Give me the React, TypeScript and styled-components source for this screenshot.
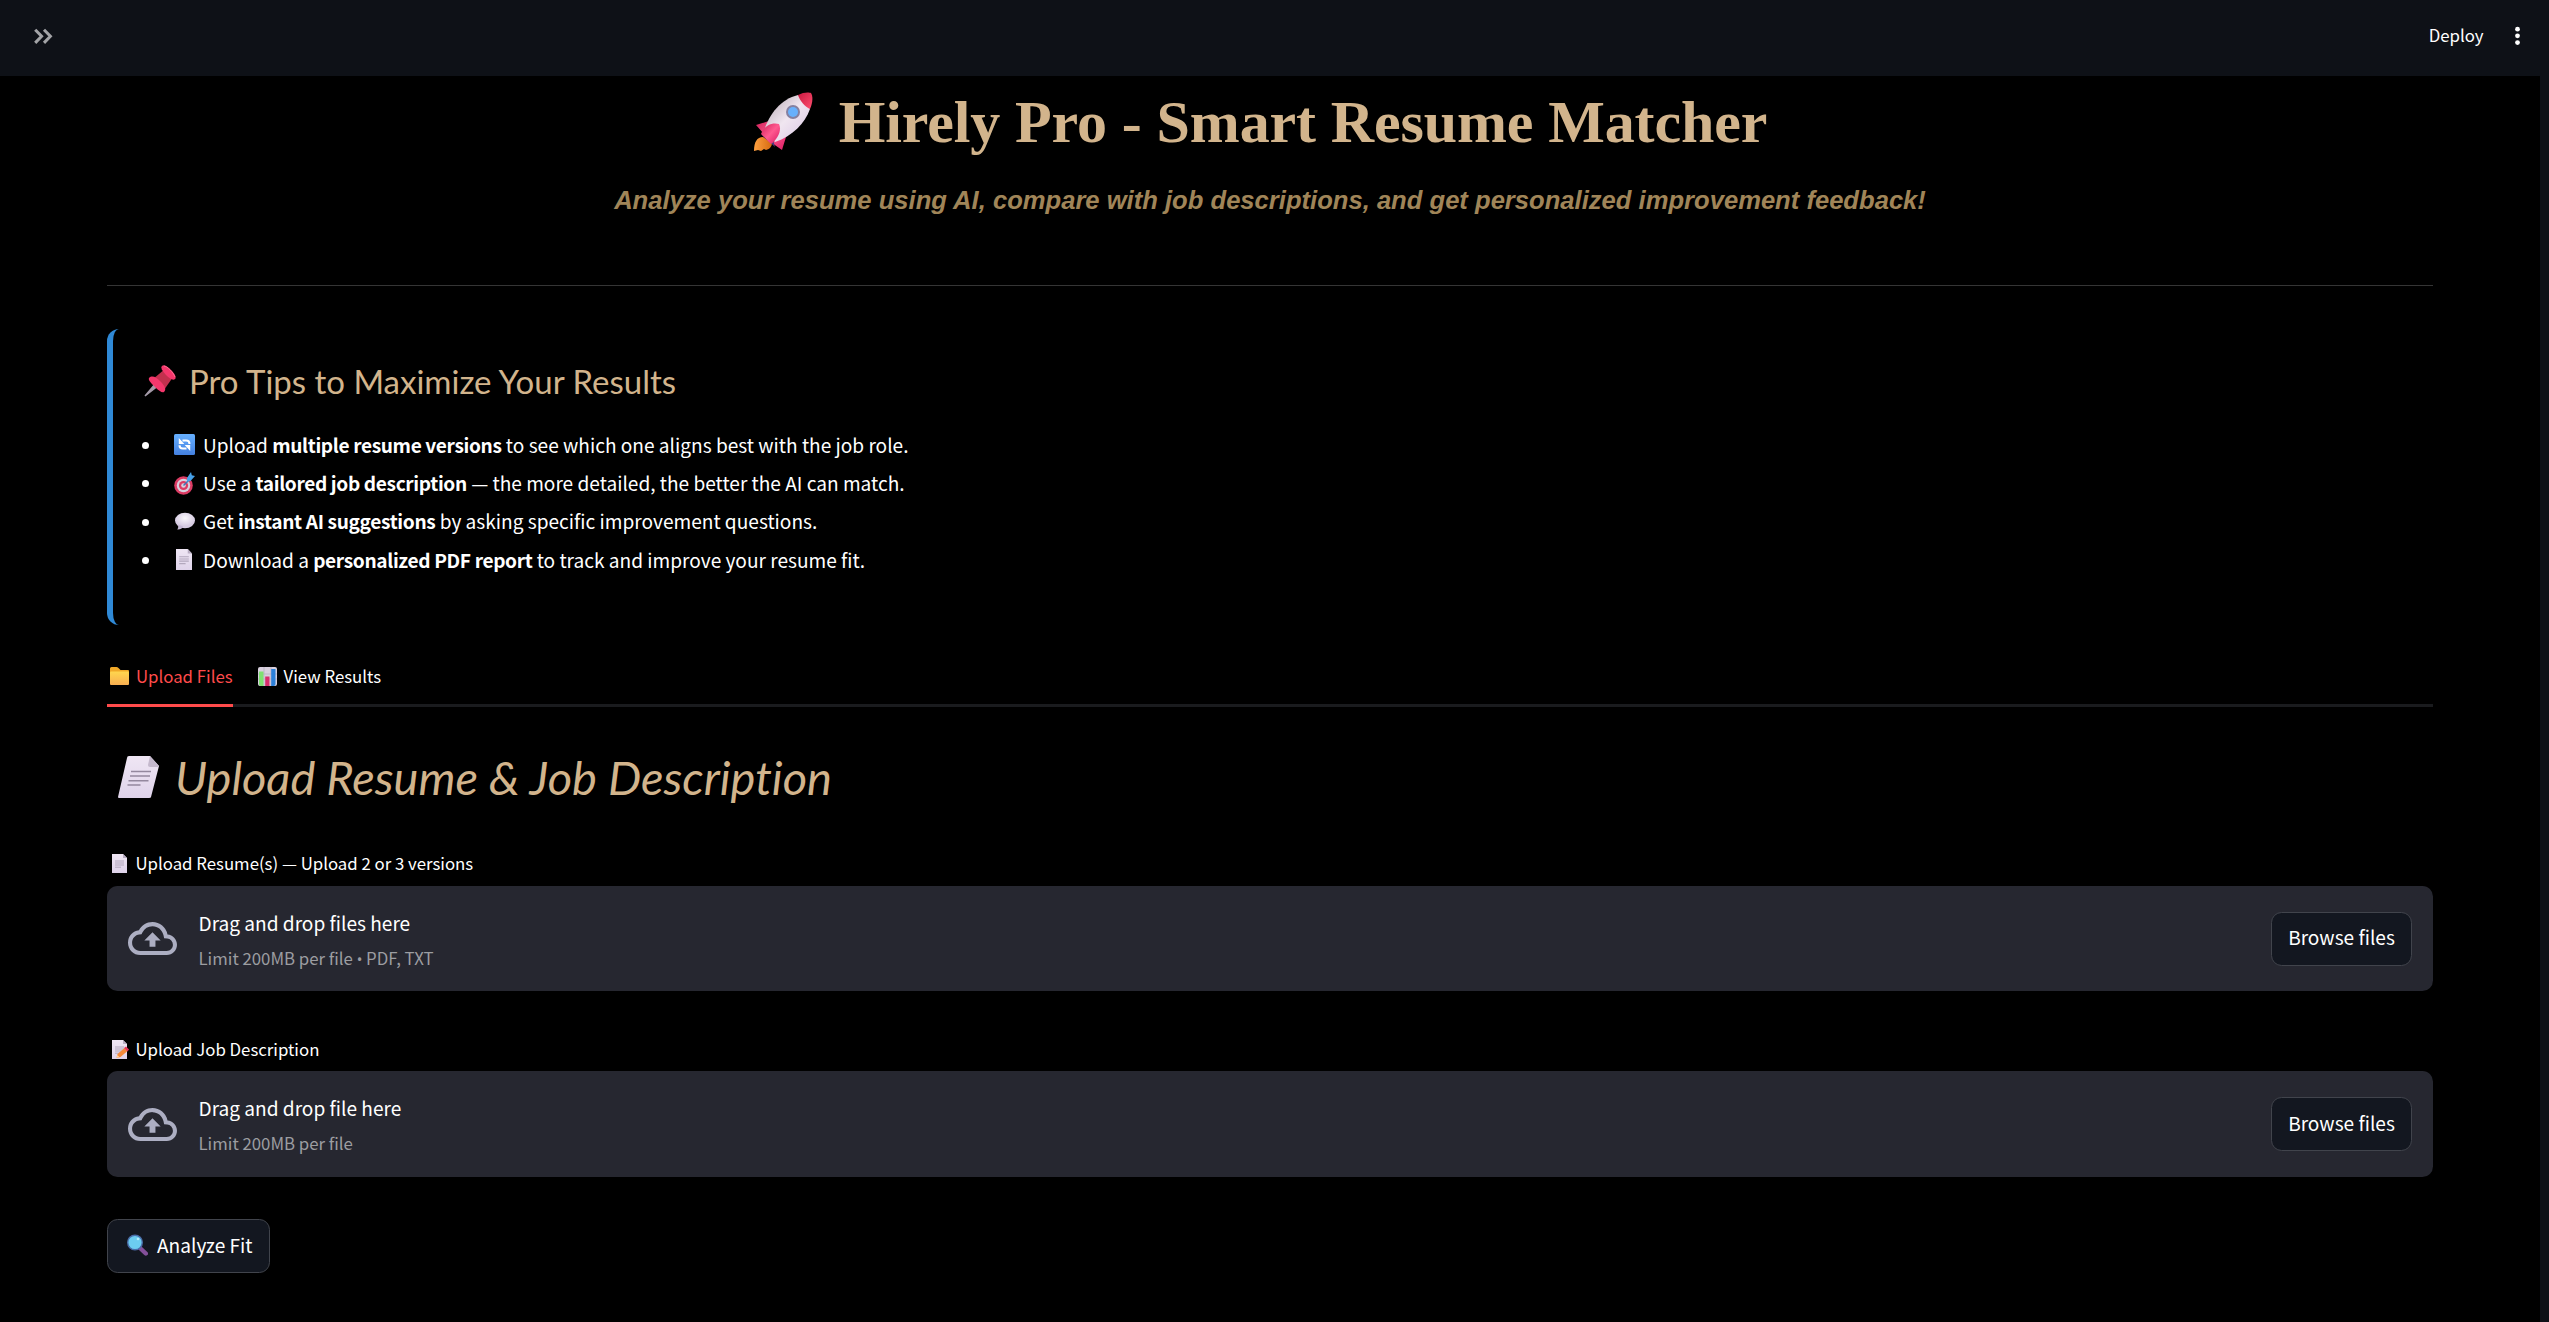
import React from 'react';
import styled, { createGlobalStyle } from 'styled-components';

const sans = '"Source Sans Pro", "Noto Sans CJK SC", sans-serif';
const display = 'Papyrus, Lato, sans-serif';

const Global = createGlobalStyle`
  * { box-sizing: border-box; }
  body { margin: 0; background: #0e1117; color: #fff; font-family: ${sans}; }
  h1, h2, h3, p, ul { margin: 0; padding: 0; font-weight: 400; }
  button { font-family: inherit; color: inherit; }
  svg { display: block; flex: none; }
`;

const Page = styled.div`
  display: flex;
  flex-direction: column;
  height: 1322px;
  overflow: hidden;
`;
const Header = styled.header`
  display: flex;
  align-items: center;
  justify-content: space-between;
  height: 76px;
  padding: 0 26px 5px 29px;
  background: #0e1117;
`;
const HeaderActions = styled.div`
  display: flex;
  align-items: center;
  gap: 26.5px;
`;
const Deploy = styled.button`
  border: 0;
  background: none;
  padding: 0 0 2px;
  font-size: 16.8px;
  line-height: 24px;
`;
const Main = styled.main`
  flex: 1;
  width: 2540px;
  padding: 0 107px;
  background: #000;
`;
const Title = styled.h1`
  display: flex;
  align-items: center;
  justify-content: center;
  gap: 26px;
  height: 92px;
  padding-right: 20px;
  color: #d2b48c;
  font: 700 60px/92px "Times New Roman", "Liberation Serif", serif;
  letter-spacing: -0.12px;
  white-space: nowrap;
`;
const Subtitle = styled.p`
  height: 64px;
  color: #a08558;
  font: italic 700 25.6px/64px "Liberation Sans", sans-serif;
  text-align: center;
  white-space: nowrap;
`;
const Divider = styled.div`
  height: 1px;
  margin-top: 53px;
  background: #353535;
`;
const Tips = styled.section`
  height: 296px;
  margin-top: 43px;
  padding: 22px 0 0 30px;
  border-left: 6px solid #2f89d6;
  border-radius: 12px;
`;
const TipsHeading = styled.h3`
  display: flex;
  align-items: center;
  gap: 13px;
  height: 60px;
  padding-left: 1px;
  color: #d2b48c;
  font: 400 33px/60px ${display};
`;
const TipList = styled.ul`
  margin-top: 14.6px;
  list-style: none;
`;
const TipItem = styled.li`
  display: flex;
  align-items: center;
  height: 38.4px;
  font-size: 19.1px;
  line-height: 38.4px;
  white-space: pre;
  &::before {
    content: '';
    width: 7px;
    height: 7px;
    margin: 1px 24.5px 0 -1px;
    border-radius: 50%;
    background: #fff;
  }
  b { letter-spacing: -0.35px; }
`;
const TipIcon = styled.span`
  display: flex;
  justify-content: center;
  width: 21px;
  margin-right: 8.5px;
`;
const Tabs = styled.nav`
  display: flex;
  gap: 23px;
  height: 59px;
  margin-top: 23px;
  border-bottom: 3px solid #1a1b1e;
`;
const Tab = styled.button<{ $active?: boolean }>`
  display: flex;
  align-items: center;
  gap: 7px;
  height: 59px;
  padding: 0 0 0 2px;
  border: 0;
  border-bottom: 3px solid ${p => (p.$active ? '#ff4b4b' : 'transparent')};
  background: none;
  color: ${p => (p.$active ? '#ff4b4b' : '#fff')};
  font-size: 16.8px;
  line-height: 24px;
`;
const SectionHeading = styled.h2`
  display: flex;
  align-items: center;
  gap: 16px;
  height: 80px;
  margin: 30px 0 33px;
  padding-left: 11px;
  color: #d2b48c;
  font: italic 400 47px/80px ${display};
  font-variant-ligatures: none;
`;
const Label = styled.div`
  display: flex;
  align-items: center;
  height: 26px;
  padding-left: 5px;
  font-size: 16.8px;
  line-height: 26px;
`;
const LabelIcon = styled.span`
  width: 17px;
  margin-right: 6.5px;
`;
const Dropzone = styled.div<{ $h: number; $top: number }>`
  display: flex;
  align-items: center;
  height: ${p => p.$h}px;
  margin-top: ${p => p.$top}px;
  padding: 0 21px;
  border-radius: 10.6px;
  background: #262730;
`;
const DropText = styled.div`
  flex: 1;
  display: flex;
  flex-direction: column;
  margin-left: 21.5px;
  padding-top: 4px;
`;
const DropTitle = styled.span`
  font-size: 19.1px;
  line-height: 34px;
`;
const DropHint = styled.span`
  color: #9c9da1;
  font-size: 16.8px;
  line-height: 36px;
`;
const Bullet = styled.span`
  font: 15px/1 "Noto Sans", sans-serif;
`;
const Button = styled.button<{ $w: number; $left?: number }>`
  display: flex;
  align-items: center;
  justify-content: center;
  gap: 8.5px;
  width: ${p => p.$w}px;
  height: 54px;
  padding: 0 0 3px ${p => p.$left ?? 0}px;
  border: 1px solid #41444c;
  border-radius: 10.6px;
  background: #131720;
  font-size: 19.1px;
  line-height: 28px;
`;
const Spacer = styled.div<{ $h: number }>`
  height: ${p => p.$h}px;
`;

const Chevrons = () => (
  <svg width="28" height="28" viewBox="0 0 28 28" fill="none" stroke="#a3a4a7" strokeWidth="3">
    <path d="M6.200 7.700l6.400 6.600-6.400 6.600M15 7.700l6.400 6.600-6.400 6.600" />
  </svg>
);
const Dots = () => (
  <svg width="13" height="26" viewBox="0 0 13 26" fill="#fff">
    <circle cx="7.500" cy="6.200" r="2.400" /><circle cx="7.500" cy="12.800" r="2.400" /><circle cx="7.500" cy="19.600" r="2.400" />
  </svg>
);
const Rocket = () => (
  <svg width="60" height="60" viewBox="0 0 60 60">
    <defs>
      <linearGradient id="rb" x1="0" y1="0" x2="1" y2="1"><stop offset=".2" stopColor="#c9bcc6" /><stop offset=".5" stopColor="#f0e6f0" /><stop offset="1" stopColor="#d8c4e4" /></linearGradient>
      <linearGradient id="rr" x1="0" y1="0" x2="1" y2="1"><stop offset="0" stopColor="#c81840" /><stop offset="1" stopColor="#ff5070" /></linearGradient>
      <linearGradient id="rf" x1="0" y1="0" x2="1" y2="0"><stop offset="0" stopColor="#ffa040" /><stop offset="1" stopColor="#d46a10" /></linearGradient>
      <linearGradient id="rp" x1="0" y1="0" x2="1" y2="1"><stop offset="0" stopColor="#d02058" /><stop offset=".5" stopColor="#ff5a90" /><stop offset="1" stopColor="#d81860" /></linearGradient>
    </defs>
    <path d="M10 45C4 45 1 50 1 59l4-1 3 1 3-2 2 1c4-1 6-4 6-7z" fill="url(#rf)" />
    <path d="M3 33l13-4c3-1 5-1 7-1L12 43zM29 58l4-13c2-3 2-5 1-6L19 51z" fill="url(#rp)" />
    <path d="M9 43l13 12-2-7-8-8z" fill="#4a3a80" />
    <path d="M11 39C16 22 28 7 45 3c6 3 11 8 12 14C52 31 40 44 22 50z" fill="url(#rb)" />
    <path d="M45 3c5-3 11-3 13-2 2 3 2 9-1 16-5-2-10-8-12-14z" fill="url(#rr)" />
    <path d="M8 42c3-9 12-12 18-10 3 6-1 15-8 20z" fill="url(#rp)" />
    <circle cx="40" cy="20" r="7" fill="#8580a0" /><circle cx="40" cy="20" r="5" fill="#68b0fc" />
  </svg>
);
const Pin = () => (
  <svg width="32" height="32" viewBox="0 0 32 32">
    <path d="M1 31L12 18l3 2z" fill="#a49aa8" stroke="#a49aa8" strokeWidth="1.400" />
    <path d="M9 14L21 4l8 8-9 13z" fill="#c2304e" />
    <path d="M5 13c3-3 7-1 11 3s7 8 4 11c-2 1-5-1-9-5s-7-7-6-9z" fill="#f4376c" />
    <path d="M18 1c2-2 6 1 9 4s6 7 4 9-6-1-9-4-6-7-4-9z" fill="#f4376c" />
    <path d="M20 1c3 0 9 6 11 11" stroke="#ff6f92" fill="none" />
  </svg>
);
const Refresh = () => (
  <svg width="21" height="21" viewBox="0 0 21 21">
    <defs><linearGradient id="bl" x1="0" y1="0" x2="0" y2="1"><stop offset="0" stopColor="#66b0ff" /><stop offset="1" stopColor="#4480e0" /></linearGradient></defs>
    <rect width="21" height="21" rx="1.500" fill="url(#bl)" />
    <path d="M8.500 6.600h3.700q3.300 0 3.300 3.300M12.500 14.500H8.800q-3.300 0-3.300-3.300" fill="none" stroke="#fff" strokeWidth="2" />
    <path d="M4.800 4v6h5.500zM16.200 17v-6h-5.500z" fill="#fff" />
  </svg>
);
const Target = () => (
  <svg width="21" height="25" viewBox="0 0 21 25">
    <circle cx="9.500" cy="14.500" r="9.300" fill="#dc3c64" /><circle cx="9.500" cy="14.500" r="6.700" fill="#d8d0de" />
    <circle cx="9.500" cy="14.500" r="4.600" fill="#dc3c64" /><circle cx="9.500" cy="14.500" r="2.300" fill="#d8d0de" />
    <path d="M9.500 14.500L16 8" stroke="#3a78b8" strokeWidth="1.500" />
    <path d="M13 7l4-6 .8 3.200L21 5l-4.500 5-3.500.5z" fill="#46a0e8" />
  </svg>
);
const Bubble = () => (
  <svg width="21" height="21" viewBox="0 0 21 21">
    <defs><radialGradient id="bu" cx=".5" cy=".35"><stop offset="0" stopColor="#fbf8fc" /><stop offset="1" stopColor="#d6cbe2" /></radialGradient></defs>
    <ellipse cx="11" cy="9.500" rx="10" ry="7.800" fill="url(#bu)" /><path d="M4 13.500c.5 2 .3 3.700-.8 5 3 .3 5-1 6-3z" fill="#c5b8d4" />
  </svg>
);
const Doc = ({ w, h, skew, pencil }: { w: number; h: number; skew?: boolean; pencil?: boolean }) => (
  <svg width={w} height={h} viewBox={skew ? '0 0 41 42' : pencil ? '0 0 17 19' : '0 0 15 19'} preserveAspectRatio="none">
    <defs><linearGradient id="dg" x1="0" y1="0" x2="0" y2="1"><stop offset="0" stopColor="#efe6f4" /><stop offset="1" stopColor="#dfd3ea" /></linearGradient></defs>
    {skew ? (
      <>
        <path d="M11 0h21l9 10-8 31q0 1-2 1H1q-1 0-1-1L9 2q0-2 2-2z" fill="url(#dg)" />
        <path d="M32 0l9 10-1 1h-8q-2 0-2-2z" fill="#c5b9cd" />
        <path d="M13 15.500h20M12 20h20M10.500 24.700h20M9.500 29h13" stroke="#94889e" strokeWidth="1.500" />
      </>
    ) : (
      <>
        <path d="M0 0h11l4 4v15H0z" fill="url(#dg)" /><path d="M11 0l4 4h-4z" fill="#b9adc3" />
        <path d="M3 7h9M3 9h9M3 11h9M3 13.200h6" stroke="#b3a8bd" strokeWidth="1" />
        {pencil && <><path d="M4.500 18l1-4 7-6 3 3-7 6z" fill="#f58a3a" /><path d="M12 8l2-1.500 3 3-1.500 2z" fill="#e8365c" /><path d="M4.500 18l.8-3 2 2z" fill="#ffd0a0" /></>}
      </>
    )}
  </svg>
);
const Folder = () => (
  <svg width="20" height="18" viewBox="0 0 20 18">
    <defs><linearGradient id="fo" x1="0" y1="0" x2="0" y2="1"><stop offset="0" stopColor="#ffd64e" /><stop offset="1" stopColor="#f8ae50" /></linearGradient></defs>
    <path d="M1 1.500Q1 0 2.500 0h5q1 0 2 1l2 2h7.500q1 0 1 1v8H1z" fill="#f0a828" /><rect x="1" y="4.500" width="19" height="13.500" rx="1" fill="url(#fo)" />
  </svg>
);
const Chart = () => (
  <svg width="19" height="19" viewBox="0 0 19 19">
    <rect width="19" height="19" rx="2" fill="#d8d0de" /><path d="M0 7h19M0 12h19M6 0v19M13 0v19" stroke="#b8aec4" strokeWidth=".8" />
    <path d="M1 4.500h4.500V19H3q-2 0-2-2z" fill="#7ee070" /><path d="M7.200 9.500h4.300V19H7.200z" fill="#d82c6c" /><path d="M13.200 2h4.300v15q0 2-2 2h-2.300z" fill="#2c80d8" />
  </svg>
);
const Lens = () => (
  <svg width="21" height="22" viewBox="0 0 21 22">
    <path d="M13.500 14.500l5.300 5" stroke="#84509a" strokeWidth="4.400" strokeLinecap="round" /><circle cx="8" cy="8.500" r="7.300" fill="#6ccdf0" stroke="#4a6ca8" strokeWidth="1.400" /><circle cx="11" cy="5" r="1.300" fill="#b8ecfa" />
  </svg>
);
const Cloud = () => (
  <svg width="49" height="33" viewBox="0 4 24 16" fill="#acaec2" preserveAspectRatio="none">
    <path d="M19.350 10.040A7.490 7.490 0 0 0 12 4C9.110 4 6.600 5.640 5.350 8.040A5.994 5.994 0 0 0 0 14c0 3.310 2.690 6 6 6h13c2.760 0 5-2.240 5-5 0-2.640-2.050-4.780-4.650-4.960zM19 18H6c-2.210 0-4-1.790-4-4 0-2.050 1.530-3.760 3.560-3.970l1.070-.11.5-.95A5.469 5.469 0 0 1 12 6c2.620 0 4.880 1.860 5.390 4.430l.3 1.500 1.530.11A2.980 2.980 0 0 1 22 15c0 1.650-1.350 3-3 3zM8 13h2.550v3h2.900v-3H16l-4-4z" />
  </svg>
);

const Tip = ({ icon, children }: { icon: React.ReactNode; children: React.ReactNode }) => (
  <TipItem><TipIcon>{icon}</TipIcon><span>{children}</span></TipItem>
);

export default function App() {
  return (
    <Page>
      <Global />
      <Header>
        <Chevrons />
        <HeaderActions><Deploy>Deploy</Deploy><Dots /></HeaderActions>
      </Header>
      <Main>
        <Title><Rocket /><span>Hirely Pro - Smart Resume Matcher</span></Title>
        <Subtitle>Analyze your resume using AI, compare with job descriptions, and get personalized improvement feedback!</Subtitle>
        <Divider />
        <Tips>
          <TipsHeading><Pin /><span>Pro Tips to Maximize Your Results</span></TipsHeading>
          <TipList>
            <Tip icon={<Refresh />}>Upload <b>multiple resume versions</b> to see which one aligns best with the job role.</Tip>
            <Tip icon={<Target />}>Use a <b>tailored job description</b> — the more detailed, the better the AI can match.</Tip>
            <Tip icon={<Bubble />}>Get <b>instant AI suggestions</b> by asking specific improvement questions.</Tip>
            <Tip icon={<Doc w={16} h={21} />}>Download a <b>personalized PDF report</b> to track and improve your resume fit.</Tip>
          </TipList>
        </Tips>
        <Tabs>
          <Tab $active><Folder />Upload Files</Tab>
          <Tab><Chart />View Results</Tab>
        </Tabs>
        <SectionHeading><Doc w={41} h={42} skew /><span>Upload Resume &amp; Job Description</span></SectionHeading>
        <Label><LabelIcon><Doc w={15} h={19} /></LabelIcon>Upload Resume(s) — Upload 2 or 3 versions</Label>
        <Dropzone $h={105} $top={10}>
          <Cloud />
          <DropText><DropTitle>Drag and drop files here</DropTitle><DropHint>Limit 200MB per file <Bullet>•</Bullet> PDF, TXT</DropHint></DropText>
          <Button $w={141}>Browse files</Button>
        </Dropzone>
        <Spacer $h={45} />
        <Label><LabelIcon><Doc w={17} h={19} pencil /></LabelIcon>Upload Job Description</Label>
        <Dropzone $h={106} $top={9}>
          <Cloud />
          <DropText><DropTitle>Drag and drop file here</DropTitle><DropHint>Limit 200MB per file</DropHint></DropText>
          <Button $w={141}>Browse files</Button>
        </Dropzone>
        <Spacer $h={42} />
        <Button $w={163} $left={3}><Lens />Analyze Fit</Button>
      </Main>
    </Page>
  );
}
